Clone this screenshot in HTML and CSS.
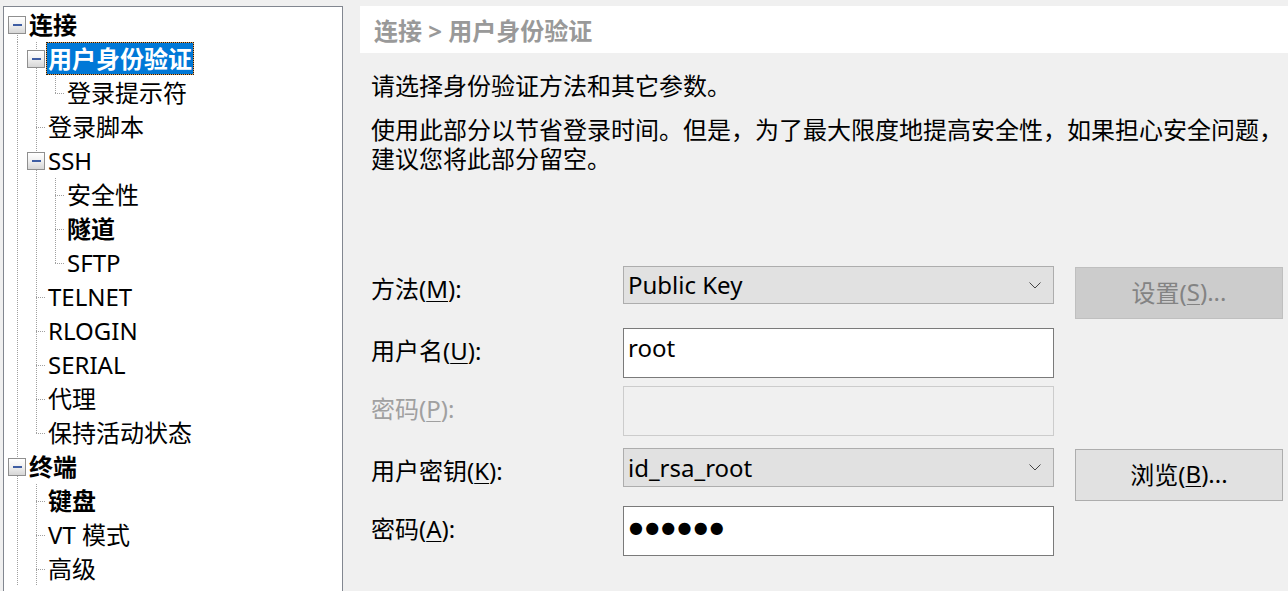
FILE: index.html
```html
<!DOCTYPE html>
<html lang="zh-CN">
<head>
<meta charset="utf-8">
<title>会话属性 - 用户身份验证</title>
<link rel="stylesheet" href="styles.css">
</head>
<body>
<div class="dialog">
  <div class="tree">
    <div class="row"><div class="cell box-root"><div class="box"><div class="minus"></div></div></div><div class="label bold">连接</div></div>
    <div class="row"><div class="cell v"></div><div class="cell box-full"><div class="box"><div class="minus"></div></div></div><div class="label bold selected">用户身份验证</div></div>
    <div class="row"><div class="cell v"></div><div class="cell v"></div><div class="cell ell"></div><div class="label">登录提示符</div></div>
    <div class="row"><div class="cell v"></div><div class="cell tee"></div><div class="label">登录脚本</div></div>
    <div class="row"><div class="cell v"></div><div class="cell box-full"><div class="box"><div class="minus"></div></div></div><div class="label">SSH</div></div>
    <div class="row"><div class="cell v"></div><div class="cell v"></div><div class="cell tee"></div><div class="label">安全性</div></div>
    <div class="row"><div class="cell v"></div><div class="cell v"></div><div class="cell tee"></div><div class="label bold">隧道</div></div>
    <div class="row"><div class="cell v"></div><div class="cell v"></div><div class="cell ell"></div><div class="label">SFTP</div></div>
    <div class="row"><div class="cell v"></div><div class="cell tee"></div><div class="label">TELNET</div></div>
    <div class="row"><div class="cell v"></div><div class="cell tee"></div><div class="label">RLOGIN</div></div>
    <div class="row"><div class="cell v"></div><div class="cell tee"></div><div class="label">SERIAL</div></div>
    <div class="row"><div class="cell v"></div><div class="cell tee"></div><div class="label">代理</div></div>
    <div class="row"><div class="cell v"></div><div class="cell ell"></div><div class="label">保持活动状态</div></div>
    <div class="row"><div class="cell box-full"><div class="box"><div class="minus"></div></div></div><div class="label bold">终端</div></div>
    <div class="row"><div class="cell v"></div><div class="cell tee"></div><div class="label bold">键盘</div></div>
    <div class="row"><div class="cell v"></div><div class="cell tee"></div><div class="label">VT 模式</div></div>
    <div class="row"><div class="cell v"></div><div class="cell tee"></div><div class="label">高级</div></div>
  </div>

  <div class="pane">
    <div class="header">连接 &gt; 用户身份验证</div>
    <p class="desc first">请选择身份验证方法和其它参数。</p>
    <p class="desc">使用此部分以节省登录时间。但是，为了最大限度地提高安全性，如果担心安全问题，<br>建议您将此部分留空。</p>

    <div class="form">
      <div class="flabel r1">方法(<u>M</u>):</div>
      <div class="select r1"><span>Public Key</span><svg class="chev" width="12" height="7" viewBox="0 0 12 7"><path d="M0.5 0.5 L6 6 L11.5 0.5" fill="none" stroke="#444" stroke-width="1"/></svg></div>
      <div class="button disabled r1">设置(<u>S</u>)...</div>

      <div class="flabel r2">用户名(<u>U</u>):</div>
      <div class="input r2">root</div>

      <div class="flabel dim r3">密码(<u>P</u>):</div>
      <div class="input off r3"></div>

      <div class="flabel r4">用户密钥(<u>K</u>):</div>
      <div class="select r4"><span>id_rsa_root</span><svg class="chev" width="12" height="7" viewBox="0 0 12 7"><path d="M0.5 0.5 L6 6 L11.5 0.5" fill="none" stroke="#444" stroke-width="1"/></svg></div>
      <div class="button r4">浏览(<u>B</u>)...</div>

      <div class="flabel r5">密码(<u>A</u>):</div>
      <div class="input r5"><span class="dots">●●●●●●</span></div>
    </div>
  </div>
</div>
</body>
</html>
```

FILE: styles.css
```css
html, body {
  margin: 0;
  padding: 0;
  background: #f0f0f0;
  overflow: hidden;
}

body {
  font-family: "Noto Sans", "Noto Sans CJK SC", sans-serif;
  font-size: 24px;
  color: #000;
  width: 1288px;
  height: 591px;
}

.dialog {
  display: flex;
  align-items: flex-start;
  height: 591px;
}

/* ---------- tree ---------- */
.tree {
  margin: 6px 0 0 3px;
  width: 340px;
  height: 600px;
  background: #fff;
  border: 1px solid #828790;
  padding: 1px 0 0 4px;
  box-sizing: border-box;
  flex-shrink: 0;
}

.row {
  display: flex;
  height: 34px;
}

.cell {
  width: 19px;
  height: 34px;
  flex-shrink: 0;
  background-repeat: no-repeat;
}

.v {
  background-image: repeating-linear-gradient(to bottom, #a0a0a0 0 1px, transparent 1px 2px);
  background-size: 1px 34px;
  background-position: 9px 0;
}

.tee {
  background-image:
    repeating-linear-gradient(to bottom, #a0a0a0 0 1px, transparent 1px 2px),
    repeating-linear-gradient(to right, #a0a0a0 0 1px, transparent 1px 2px);
  background-size: 1px 34px, 10px 1px;
  background-position: 9px 0, 9px 17px;
}

.ell {
  background-image:
    repeating-linear-gradient(to bottom, #a0a0a0 0 1px, transparent 1px 2px),
    repeating-linear-gradient(to right, #a0a0a0 0 1px, transparent 1px 2px);
  background-size: 1px 18px, 10px 1px;
  background-position: 9px 0, 9px 17px;
}

.box-root {
  background-image: repeating-linear-gradient(to bottom, #a0a0a0 0 1px, transparent 1px 2px);
  background-size: 1px 17px;
  background-position: 9px 17px;
}

.box-full {
  background-image: repeating-linear-gradient(to bottom, #a0a0a0 0 1px, transparent 1px 2px);
  background-size: 1px 34px;
  background-position: 9px 0;
}

.box {
  width: 18px;
  height: 18px;
  margin-top: 8px;
  box-sizing: border-box;
  border: 1px solid #8f8f8f;
  background: linear-gradient(to bottom, #ffffff 0%, #f2f2f2 45%, #d6d6d6 100%);
  display: flex;
  align-items: center;
  justify-content: center;
}

.minus {
  width: 9px;
  height: 2px;
  background: #3f5ea3;
}

.label {
  height: 33px;
  line-height: 33px;
  padding: 0 2px;
  white-space: nowrap;
  box-sizing: border-box;
}

.bold {
  font-weight: bold;
}

.selected {
  color: #fff;
  border: 1px dotted #1a1a1a;
  padding: 0 1px;
  line-height: 31px;
  background:
    linear-gradient(#0078d7, #0078d7) padding-box,
    #e6a050 border-box;
}

/* ---------- right pane ---------- */
.pane {
  flex: 1;
  margin-left: 17px;
  display: flex;
  flex-direction: column;
}

.header {
  margin-top: 6px;
  height: 47px;
  background: #fff;
  padding-left: 14px;
  line-height: 49px;
  font-weight: bold;
  color: #999999;
}

.desc {
  margin: 15px 0 0 11px;
  line-height: 29px;
  white-space: nowrap;
}

.desc.first {
  margin-top: 18px;
}

.form {
  margin: 93px 0 0 11px;
  display: grid;
  grid-template-columns: 252px 431px 21px 208px;
  grid-template-rows: 62px 58px 62px 58px 50px;
  align-items: start;
}

.r1 { grid-row: 1; }
.r2 { grid-row: 2; }
.r3 { grid-row: 3; }
.r4 { grid-row: 4; }
.r5 { grid-row: 5; }

.flabel {
  grid-column: 1;
  height: 46px;
  line-height: 46px;
  white-space: nowrap;
}

.flabel u,
.button u {
  text-underline-offset: 3px;
  text-decoration-thickness: 1px;
}

.dim {
  color: #a0a0a0;
}

.select {
  grid-column: 2;
  height: 38px;
  box-sizing: border-box;
  border: 1px solid #adadad;
  background: #e1e1e1;
  display: flex;
  align-items: center;
  justify-content: space-between;
  padding: 0 12px 0 4px;
  line-height: 34px;
}

.r4.select {
  height: 39px;
}

.chev {
  display: block;
}

.input {
  grid-column: 2;
  height: 50px;
  box-sizing: border-box;
  border: 1px solid #7a7a7a;
  background: #fff;
  padding: 2px 4px 0;
  line-height: 34px;
}

.input.off {
  border-color: #cccccc;
  background: #f0f0f0;
}

.dots {
  font-family: "DejaVu Sans", sans-serif;
  font-size: 16px;
  letter-spacing: 2.2px;
  margin-left: 1px;
  position: relative;
  top: -2px;
}

.button {
  grid-column: 4;
  height: 52px;
  margin-top: 1px;
  padding-bottom: 3px;
  box-sizing: border-box;
  border: 1px solid #adadad;
  background: #e1e1e1;
  display: flex;
  align-items: center;
  justify-content: center;
  white-space: nowrap;
}

.button.disabled {
  background: #cccccc;
  border-color: #bfbfbf;
  color: #838383;
}
```
